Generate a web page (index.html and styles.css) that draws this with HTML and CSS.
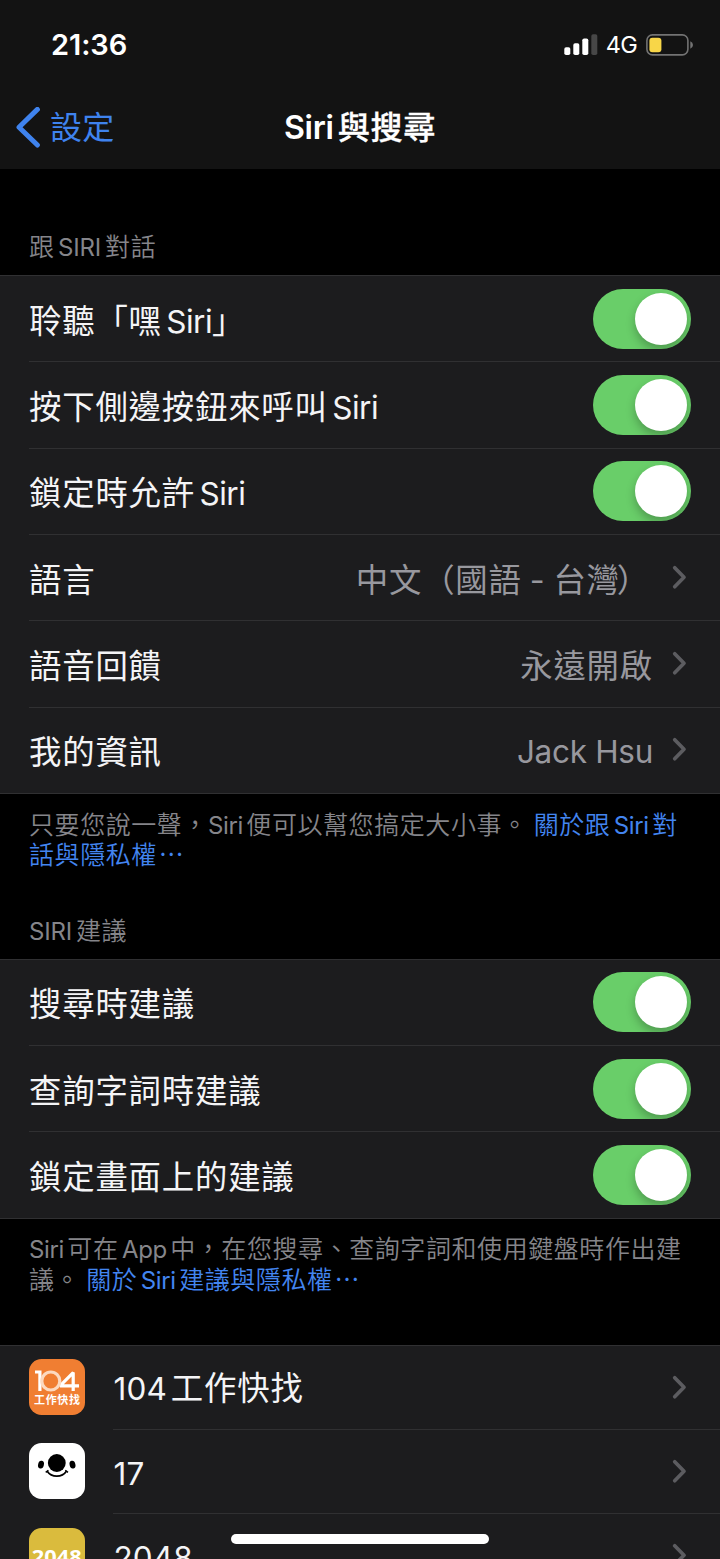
FILE: index.html
```html
<!DOCTYPE html>
<html lang="zh-Hant-TW">
<head>
<meta charset="utf-8">
<title>Siri與搜尋</title>
<link rel="stylesheet" href="styles.css">
</head>
<body>
<svg class="defs" aria-hidden="true">
  <symbol id="chev" viewBox="0 0 16 26"><path d="M2.7 2.7 L12 12.2 L2.7 21.7" fill="none" stroke="#5c5c60" stroke-width="3.7" stroke-linecap="round" stroke-linejoin="round"/></symbol>
</svg>
<div class="screen">
  <header class="top">
    <div class="status">
      <span class="time">21:36</span>
      <div class="indicators">
        <svg class="signal" width="34" height="22" viewBox="0 0 34 22">
          <rect x="0.3" y="13.3" width="6" height="7.7" rx="1.8" fill="#fff"/>
          <rect x="9.3" y="9.3" width="6" height="11.7" rx="1.8" fill="#fff"/>
          <rect x="18.3" y="4.5" width="6" height="16.5" rx="1.8" fill="#fff"/>
          <rect x="27.3" y="0.3" width="6" height="20.7" rx="1.8" fill="#474747"/>
        </svg>
        <span class="net">4G</span>
        <svg class="battery" width="48" height="22" viewBox="0 0 48 22">
          <rect x="0.9" y="0.9" width="41" height="20" rx="5.6" fill="none" stroke="#737373" stroke-width="1.6"/>
          <rect x="3.4" y="3.8" width="12" height="14.4" rx="3" fill="#f8d648"/>
          <path d="M44.3 7.2 Q47 8.4 47 11 Q47 13.6 44.3 14.8Z" fill="#737373"/>
        </svg>
      </div>
    </div>
    <nav class="nav">
      <a class="back"><svg width="26" height="42" viewBox="0 0 26 42"><path d="M22.4 2.4 L4 20.2 L22.4 38" fill="none" stroke="#3f83ee" stroke-width="5" stroke-linecap="round" stroke-linejoin="round"/></svg><span>設定</span></a>
      <h1 class="title"><span class="lat">Siri</span>與搜尋</h1>
    </nav>
  </header>

  <h2 class="caption first">跟<span class="lat mid">SIRI</span>對話</h2>
  <section class="group">
    <div class="row"><div class="cell"><span class="label">聆聽「嘿<span class="lat end">Siri</span>」</span><i class="toggle"></i></div></div>
    <div class="row"><div class="cell"><span class="label">按下側邊按鈕來呼叫<span class="lat end">Siri</span></span><i class="toggle"></i></div></div>
    <div class="row"><div class="cell"><span class="label">鎖定時允許<span class="lat end">Siri</span></span><i class="toggle"></i></div></div>
    <div class="row"><div class="cell"><span class="label">語言</span><span class="value lang">中文（國語<span class="lat dash">-</span>台灣<span class="paren">）</span></span><svg class="chev"><use href="#chev"/></svg></div></div>
    <div class="row"><div class="cell"><span class="label">語音回饋</span><span class="value">永遠開啟</span><svg class="chev"><use href="#chev"/></svg></div></div>
    <div class="row"><div class="cell"><span class="label">我的資訊</span><span class="value name">Jack Hsu</span><svg class="chev"><use href="#chev"/></svg></div></div>
  </section>
  <p class="note one">只要您說一聲，<span class="lat">Siri</span>便可以幫您搞定大小事。<a class="link">關於跟<span class="lat mid">Siri</span>對<br>話與隱私權<span class="dots">⋯</span></a></p>

  <h2 class="caption second"><span class="lat">SIRI</span>建議</h2>
  <section class="group">
    <div class="row"><div class="cell"><span class="label">搜尋時建議</span><i class="toggle"></i></div></div>
    <div class="row"><div class="cell"><span class="label">查詢字詞時建議</span><i class="toggle"></i></div></div>
    <div class="row"><div class="cell"><span class="label">鎖定畫面上的建議</span><i class="toggle"></i></div></div>
  </section>
  <p class="note two"><span class="lat">Siri</span>可在<span class="lat mid">App</span>中，在您搜尋、查詢字詞和使用鍵盤時作出建<br>議。<a class="link">關於<span class="lat mid">Siri</span>建議與隱私權<span class="dots">⋯</span></a></p>

  <section class="group apps">
    <div class="row"><svg class="app" viewBox="0 0 56 56"><rect width="56" height="56" rx="12.5" fill="#f07e32"/><g fill="none" stroke="#fff" stroke-width="3.2"><path d="M6 13 H10.9 V32"/><path d="M44.2 32 V13.6 L31 26.8 H50" stroke-linejoin="bevel"/><circle cx="21.8" cy="22" r="9" stroke="#fcd9bf"/></g><text x="5" y="45" class="logo-sub" textLength="46">工作快找</text></svg><div class="cell"><span class="label"><span class="lat num">104</span>工作快找</span><svg class="chev"><use href="#chev"/></svg></div></div>
    <div class="row"><svg class="app" viewBox="0 0 56 56"><rect width="56" height="56" rx="12.5" fill="#fff"/><circle cx="27.8" cy="20" r="8.9"/><ellipse cx="12" cy="21.6" rx="2.9" ry="3.9" transform="rotate(14 12 21.6)"/><ellipse cx="43.5" cy="21.6" rx="2.9" ry="3.9" transform="rotate(-14 43.5 21.6)"/><path d="M18 28 Q21.5 33.2 27.8 33.2 Q34.1 33.2 37.6 28" fill="none" stroke="#000" stroke-width="1.7"/><path d="M16.7 29.4 L19.4 27.2 M36.3 27.2 L39 29.4" stroke="#000" stroke-width="1.4"/></svg><div class="cell"><span class="label"><span class="lat num">17</span></span><svg class="chev"><use href="#chev"/></svg></div></div>
    <div class="row"><svg class="app" viewBox="0 0 56 56"><rect width="56" height="56" rx="12.5" fill="#dabb3d"/><text x="2.7" y="35.5" class="logo-2048" textLength="50" lengthAdjust="spacingAndGlyphs">2048</text></svg><div class="cell"><span class="label"><span class="lat num">2048</span></span><svg class="chev"><use href="#chev"/></svg></div></div>
  </section>
  <div class="home"></div>
</div>
</body>
</html>
```
FILE: styles.css
```css
* { box-sizing: border-box; }
body { margin: 0; background: #000; }
.defs { display: none; }
.screen {
  position: relative;
  width: 720px;
  height: 1559px;
  overflow: hidden;
  background: #000;
  color: #f4f4f6;
  font-family: Inter, "Noto Sans CJK TC", sans-serif;
}
.lat { font-family: Inter, "Liberation Sans", sans-serif; line-height: 0; }

.top { height: 169px; background: #131313; color: #fff; }
.status {
  display: flex;
  justify-content: space-between;
  align-items: center;
  height: 88px;
  padding: 0 26px 0 51px;
}
.time { font-size: 29px; font-weight: 600; letter-spacing: -0.1px; }
.indicators { display: flex; align-items: center; padding-top: 1px; }
.net { font-size: 23.5px; font-weight: 400; line-height: 24px; margin: 1px 9px 0 8px; letter-spacing: -0.7px; }
.nav { position: relative; display: flex; align-items: center; justify-content: center; height: 78px; }
.back {
  position: absolute;
  left: 15px;
  top: 18px;
  display: flex;
  align-items: center;
  gap: 9px;
  color: #3f83ee;
  font-family: "Noto Sans CJK TC", sans-serif;
  font-size: 32px;
  line-height: 38px;
  letter-spacing: 0.3px;
}
.back span { padding-bottom: 5px; }
.title {
  margin: 0;
  padding-bottom: 5px;
  font-family: "Noto Sans CJK TC", sans-serif;
  font-size: 32.2px;
  font-weight: 500;
  -webkit-text-stroke: 0.3px #fff;
  line-height: 42px;
  letter-spacing: 0.6px;
}
.title .lat { font-weight: 600; -webkit-text-stroke: 0; margin-right: 4px; letter-spacing: -0.3px; }

.caption {
  margin: 0;
  padding-left: 29px;
  font-family: "Noto Sans CJK TC", sans-serif;
  font-size: 25px;
  font-weight: 350;
  line-height: 30px;
  letter-spacing: 0.6px;
  color: #85858a;
}
.caption .lat { font-size: 24px; font-weight: 400; letter-spacing: -0.2px; margin-right: 4px; }
.caption .mid { margin-left: 3.5px; }
.caption.first { padding-top: 61px; height: 106px; }
.caption.second { padding-top: 45px; height: 90px; }

.group { border-top: 1px solid #303032; border-bottom: 1px solid #303032; background: #1c1c1e; }
.row { display: flex; height: 86.35px; padding-left: 29px; }
.row:first-child { margin-top: -1px; }
.cell { flex: 1; display: flex; align-items: center; padding-right: 29px; border-top: 1px solid #303032; }
.label, .value {
  font-family: "Noto Sans CJK TC", sans-serif;
  font-size: 32.4px;
  line-height: 44px;
  letter-spacing: 0.8px;
  white-space: nowrap;
}
.label { flex: 1; }
.label .lat { font-size: 31.5px; letter-spacing: -0.5px; }
.label .end { margin-left: 4.5px; }
.label .num { letter-spacing: 0.1px; margin-left: 0.5px; margin-right: 4px; }
.value { color: #98989e; margin-right: 19px; }
.value.name { font-family: Inter, sans-serif; font-size: 31.5px; letter-spacing: -0.3px; padding-top: 3px; }
.dash { margin: 0 8px; }
.paren { margin-left: -3px; margin-right: 3px; }
.chev { width: 16px; height: 26px; margin-right: 3px; }
.toggle {
  display: block;
  width: 98px;
  height: 60px;
  padding: 4px;
  border-radius: 30px;
  background: #69ce69;
  overflow: hidden;
}
.toggle::before {
  content: "";
  display: block;
  width: 52px;
  height: 52px;
  margin-left: 38.4px;
  border-radius: 50%;
  background: #fff;
  box-shadow: 0 5px 10px rgba(0, 0, 0, 0.25);
}

.note {
  margin: 0;
  padding: 13.6px 0 0 29px;
  font-family: "Noto Sans CJK TC", sans-serif;
  font-size: 25px;
  font-weight: 350;
  line-height: 30.6px;
  letter-spacing: 0.57px;
  color: #85858a;
  white-space: nowrap;
}
.note .lat { font-size: 24px; font-weight: 400; letter-spacing: -0.4px; margin-right: 3.5px; }
.note .mid { margin-left: 3.5px; }
.link { color: #4385f0; margin-left: 6px; }
.dots { margin-left: 2px; }
.one { height: 74.6px; }
.two { height: 126.4px; }

.apps .row { height: 84.2px; align-items: center; }
.apps .cell { height: 100%; margin-left: 28px; }
.apps .label { padding-bottom: 2.5px; }
.app { width: 56px; height: 56px; }
.logo-sub { font: 700 11px "Noto Sans CJK TC", sans-serif; fill: #fff; }
.logo-2048 { font: 700 20px "Open Sans", sans-serif; fill: #fff; }
.home {
  position: absolute;
  left: 231px;
  top: 1534px;
  width: 258px;
  height: 10px;
  border-radius: 5px;
  background: #fff;
}
```
